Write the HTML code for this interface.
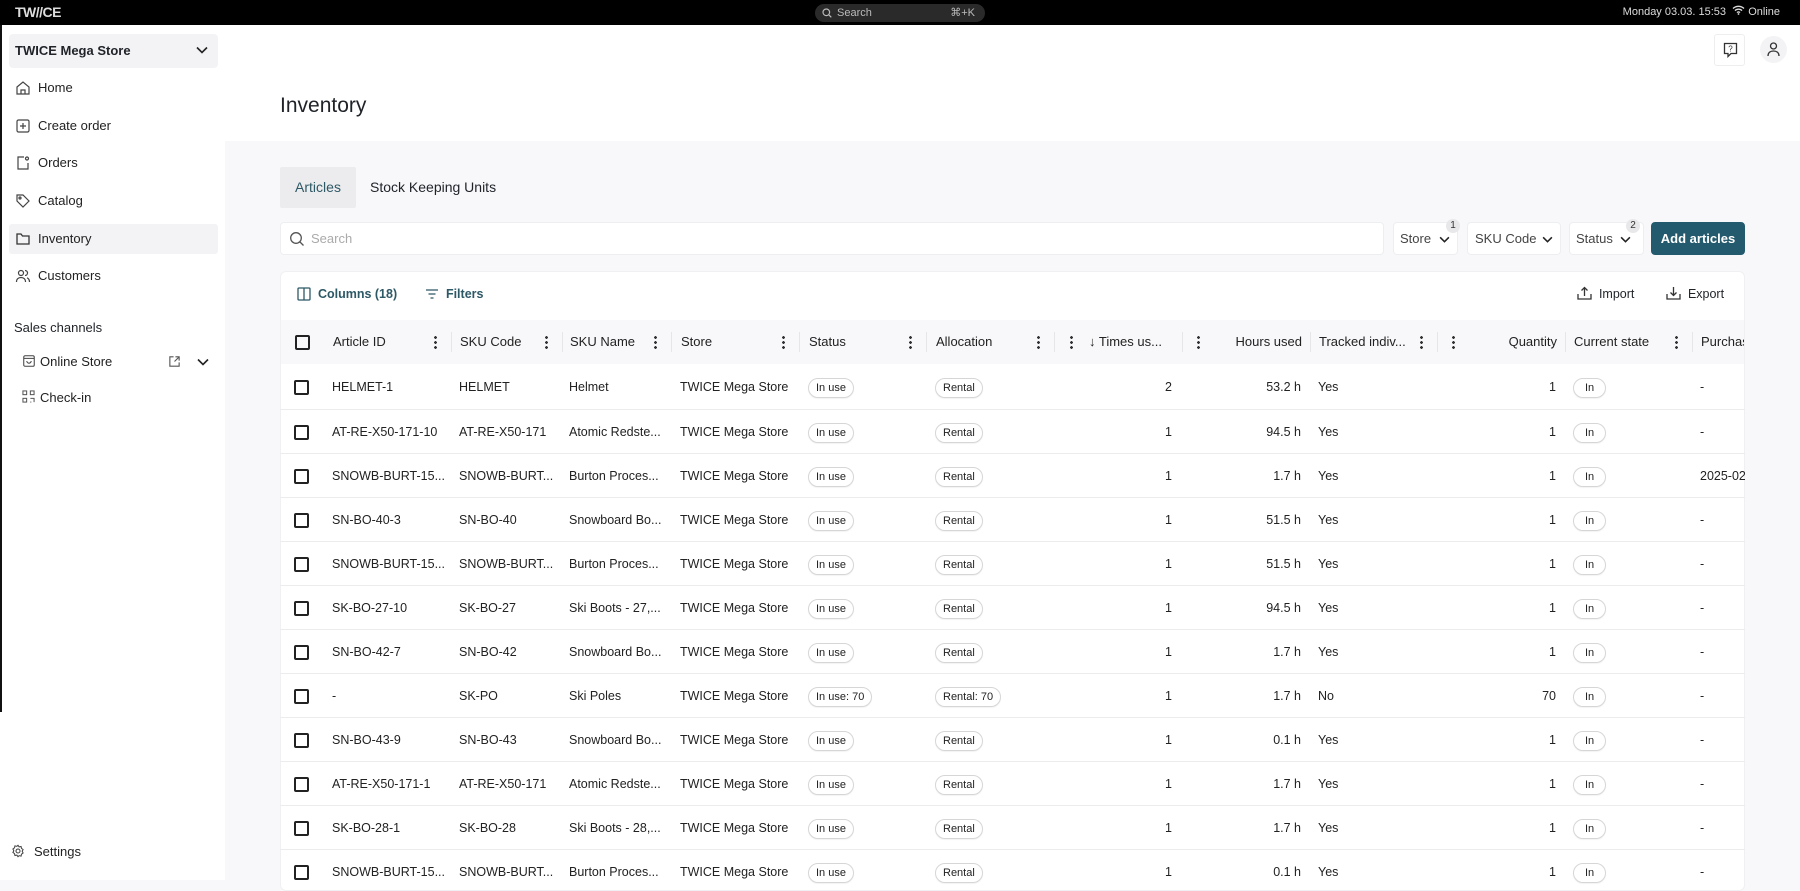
<!DOCTYPE html>
<html><head><meta charset="utf-8">
<style>
*{box-sizing:border-box;margin:0;padding:0}
body{width:1800px;height:880px;overflow:hidden;font-family:"Liberation Sans",sans-serif;color:#1f2328;background:#f8f8fa;position:relative;font-size:13px}
.top{position:absolute;left:0;top:0;width:1800px;height:25px;background:#000;color:#eee}
.logo{position:absolute;left:15px;top:4px;font-weight:700;font-size:14px;letter-spacing:-0.5px;color:#ddd}
.sp{position:absolute;left:815px;top:4px;width:170px;height:18px;border-radius:9px;background:#2a2a2a;color:#bbb;font-size:11px;line-height:18px;padding-left:22px}
.sp i{position:absolute;right:10px;font-style:normal}
.tr{position:absolute;right:20px;top:5px;font-size:11px;color:#ddd}
.side{position:absolute;left:0;top:25px;width:225px;height:855px;background:#fff}
.edge{position:absolute;left:0;top:25px;width:2px;height:687px;background:#111}
.sel{position:absolute;left:9px;top:9px;width:209px;height:34px;background:#f3f3f5;border-radius:4px;font-weight:600;font-size:13px;line-height:34px;padding-left:6px}
.nav{position:absolute;left:9px;width:209px;height:30px;line-height:30px;padding-left:29px;font-size:13px;font-weight:500;color:#222;border-radius:3px}
.nav svg{position:absolute;left:6px;top:7px}
.main-h{position:absolute;left:225px;top:25px;width:1575px;height:116px;background:#fff}
h1{position:absolute;left:280px;top:94px;font-size:21px;font-weight:400}
.tab{position:absolute;top:167px;height:41px;line-height:41px;font-size:14px}
.inp{position:absolute;top:222px;height:33px;background:#fff;border:1px solid #eceef0;border-radius:4px;font-size:13px;line-height:31px;color:#444}
.badge{position:absolute;top:-4px;width:14px;height:14px;border-radius:7px;background:#e8e8ea;font-size:10px;line-height:14px;text-align:center;color:#333}
.card{position:absolute;left:280px;top:271px;width:1465px;height:620px;background:#fff;border-radius:6px;overflow:hidden;border:1px solid #f0f0f2}
.hdr{position:absolute;left:0;top:48px;width:1465px;height:44px;background:#f8f8fa}
.row{position:absolute;left:0;width:1465px;height:44px;border-top:1px solid #ececee}
.c{position:absolute;top:0;line-height:44px;white-space:nowrap;font-size:12.5px;color:#222}
.hdr .c{font-weight:500;font-size:13px}
.r{text-align:right}
.cb{position:absolute;left:14px;top:15px;width:15px;height:15px;border:2px solid #222;border-radius:2px}
.k{position:absolute;top:15px;width:3px;height:14px;background:radial-gradient(circle,#333 1.3px,transparent 1.5px) 0 0/3px 5px repeat-y}
.sep{position:absolute;top:12px;width:1px;height:20px;background:#e6e6e8}
.pill{display:inline-block;border:1px solid #d6d6d8;border-radius:11px;height:20px;line-height:18px;padding:0 7px;font-size:11px;vertical-align:middle;box-shadow:0 1px 1px rgba(0,0,0,.05)}
</style></head><body>
<div class="top"><div class="logo">TW//CE</div>
<div class="sp"><svg style="position:absolute;left:7px;top:4px" width="10" height="10" viewBox="0 0 10 10"><circle cx="4.3" cy="4.3" r="3.3" fill="none" stroke="#bbb" stroke-width="1.2"/><path d="M6.8 6.8L9.3 9.3" stroke="#bbb" stroke-width="1.2"/></svg>Search<i>⌘+K</i></div>
<div class="tr">Monday 03.03. 15:53 &nbsp;<svg width="13" height="10" viewBox="0 0 13 10"><path d="M1 3.5a8 8 0 0 1 11 0M3 5.6a5 5 0 0 1 7 0M5 7.6a2 2 0 0 1 3 0" fill="none" stroke="#ddd" stroke-width="1.3"/><circle cx="6.5" cy="9" r=".9" fill="#ddd"/></svg> Online</div></div>
<div class="side">
<div class="sel">TWICE Mega Store<svg style="position:absolute;right:10px;top:12px" width="12" height="8" viewBox="0 0 12 8"><path d="M1 1.5l5 5 5-5" fill="none" stroke="#222" stroke-width="1.6"/></svg></div>
<div class="nav" style="top:48px"><svg width="16" height="16" viewBox="0 0 16 16" fill="none" stroke="#444" stroke-width="1.2"><path d="M2 7l6-5 6 5v7H2z M6 14v-4h4v4"/></svg>Home</div>
<div class="nav" style="top:86px"><svg width="16" height="16" viewBox="0 0 16 16" fill="none" stroke="#444" stroke-width="1.2"><rect x="2" y="2" width="12" height="12" rx="1.5"/><path d="M8 5v6M5 8h6"/></svg>Create order</div>
<div class="nav" style="top:123px"><svg width="16" height="16" viewBox="0 0 16 16" fill="none" stroke="#444" stroke-width="1.2"><path d="M9 2H3v12h10V8"/><circle cx="12" cy="3.5" r="1.5"/></svg>Orders</div>
<div class="nav" style="top:161px"><svg width="16" height="16" viewBox="0 0 16 16" fill="none" stroke="#444" stroke-width="1.2"><path d="M2 2h6l6 6-6 6-6-6z"/><circle cx="5" cy="5" r="1"/></svg>Catalog</div>
<div class="nav" style="top:199px;background:#f3f3f5"><svg width="16" height="16" viewBox="0 0 16 16" fill="none" stroke="#333" stroke-width="1.3"><path d="M2 3h4l1.5 2H14v8H2z"/></svg>Inventory</div>
<div class="nav" style="top:236px"><svg width="16" height="16" viewBox="0 0 16 16" fill="none" stroke="#444" stroke-width="1.2"><circle cx="6" cy="5" r="2.5"/><path d="M1.5 14c0-3 2-4.5 4.5-4.5s4.5 1.5 4.5 4.5M10 2.5a2.5 2.5 0 0 1 0 5M12 9.8c1.5.6 2.5 2 2.5 4.2"/></svg>Customers</div>
<div style="position:absolute;left:14px;top:295px;font-size:13px;font-weight:500">Sales channels</div>
<div class="nav" style="top:322px;padding-left:40px;left:0"><svg style="left:22px" width="14" height="14" viewBox="0 0 16 16" fill="none" stroke="#444" stroke-width="1.2"><rect x="2" y="2" width="12" height="12" rx="1.5"/><path d="M2 5h12M5.5 8a2.5 2.5 0 0 0 5 0"/></svg>Online Store
<svg style="position:absolute;left:168px;top:8px" width="13" height="13" viewBox="0 0 14 14" fill="none" stroke="#555" stroke-width="1.2"><path d="M6 2H2v10h10V8M8 2h4v4M12 2L7 7"/></svg>
<svg style="position:absolute;left:197px;top:11px" width="12" height="8" viewBox="0 0 12 8"><path d="M1 1.5l5 5 5-5" fill="none" stroke="#222" stroke-width="1.6"/></svg></div>
<div class="nav" style="top:358px;padding-left:40px;left:0"><svg style="left:22px" width="13" height="13" viewBox="0 0 14 14" fill="none" stroke="#555" stroke-width="1.1"><rect x="1" y="1" width="4" height="4"/><rect x="9" y="1" width="4" height="4"/><rect x="1" y="9" width="4" height="4"/><path d="M9 9h4v4M9 13h1"/></svg>Check-in</div>
<div class="nav" style="top:812px;left:5px"><svg width="14" height="14" viewBox="0 0 16 16" fill="none" stroke="#444" stroke-width="1.2"><circle cx="8" cy="8" r="2.3"/><path d="M8 1.5l1.3 1.8 2.2-.5.5 2.2 1.8 1.3-1 2 1 2-1.8 1.3-.5 2.2-2.2-.5L8 14.5l-1.3-1.8-2.2.5-.5-2.2-1.8-1.3 1-2-1-2 1.8-1.3.5-2.2 2.2.5z"/></svg>Settings</div>
</div>
<div class="edge"></div>
<div class="main-h">
<div style="position:absolute;left:1489px;top:9px;width:31px;height:32px;border:1px solid #eee;border-radius:3px;background:#fff"><svg style="position:absolute;left:8px;top:7px" width="15" height="16" viewBox="0 0 15 16" fill="none" stroke="#333" stroke-width="1.3"><path d="M1.5 1.5h12v10H8l-3 3v-3H1.5z"/><text x="7.5" y="9.5" font-size="8" text-anchor="middle" fill="#333" stroke="none" font-family="Liberation Sans">?</text></svg></div>
<div style="position:absolute;left:1535px;top:11px;width:27px;height:27px;border-radius:14px;background:#f3f3f6"><svg style="position:absolute;left:6px;top:5px" width="15" height="16" viewBox="0 0 15 16" fill="none" stroke="#333" stroke-width="1.3"><circle cx="7.5" cy="5" r="3"/><path d="M2 15c0-3.5 2.5-5 5.5-5s5.5 1.5 5.5 5"/></svg></div>
</div>
<h1>Inventory</h1>
<div class="tab" style="left:280px;width:76px;background:#ececee;text-align:center;color:#2d5866;border-radius:2px">Articles</div>
<div class="tab" style="left:370px">Stock Keeping Units</div>
<div class="inp" style="left:280px;width:1104px;padding-left:30px;color:#aaa"><svg style="position:absolute;left:8px;top:8px" width="16" height="16" viewBox="0 0 16 16"><circle cx="7" cy="7" r="5.3" fill="none" stroke="#555" stroke-width="1.3"/><path d="M11 11l3.5 3.5" stroke="#555" stroke-width="1.3"/></svg>Search</div>
<div class="inp" style="left:1393px;width:65px;padding-left:6px">Store <svg style="position:absolute;left:45px;top:13px" width="11" height="7" viewBox="0 0 12 8"><path d="M1 1.5l5 5 5-5" fill="none" stroke="#222" stroke-width="1.8"/></svg><div class="badge" style="left:52px">1</div></div>
<div class="inp" style="left:1467px;width:94px;padding-left:7px">SKU Code <svg style="position:absolute;left:74px;top:13px" width="11" height="7" viewBox="0 0 12 8"><path d="M1 1.5l5 5 5-5" fill="none" stroke="#222" stroke-width="1.8"/></svg></div>
<div class="inp" style="left:1569px;width:75px;padding-left:6px">Status <svg style="position:absolute;left:50px;top:13px" width="11" height="7" viewBox="0 0 12 8"><path d="M1 1.5l5 5 5-5" fill="none" stroke="#222" stroke-width="1.8"/></svg><div class="badge" style="left:56px">2</div></div>
<div class="inp" style="left:1651px;width:94px;background:#245a6e;border-color:#245a6e;color:#fff;font-weight:600;text-align:center">Add articles</div>
<div class="card">
<div style="position:absolute;left:16px;top:14px;color:#2d5866;font-weight:600;font-size:12.5px;line-height:16px"><svg style="vertical-align:-3px" width="14" height="14" viewBox="0 0 14 14" fill="none" stroke="#2d5866" stroke-width="1.3"><rect x="1" y="1" width="12" height="12" rx="1"/><path d="M7 1v12"/></svg>&nbsp; Columns (18)</div>
<div style="position:absolute;left:144px;top:14px;color:#2d5866;font-weight:600;font-size:12.5px;line-height:16px"><svg style="vertical-align:-2px" width="14" height="12" viewBox="0 0 14 12" fill="none" stroke="#2d5866" stroke-width="1.3"><path d="M1 2h12M3.5 6h7M5.5 10h3"/></svg>&nbsp; Filters</div>
<div style="position:absolute;left:1296px;top:14px;font-size:12.5px;line-height:16px"><svg style="vertical-align:-2px" width="15" height="14" viewBox="0 0 15 14" fill="none" stroke="#333" stroke-width="1.3"><path d="M1 8v5h13V8M7.5 10V1.5M4.5 4.5l3-3 3 3"/></svg>&nbsp; Import</div>
<div style="position:absolute;left:1385px;top:14px;font-size:12.5px;line-height:16px"><svg style="vertical-align:-2px" width="15" height="14" viewBox="0 0 15 14" fill="none" stroke="#333" stroke-width="1.3"><path d="M1 8v5h13V8M7.5 1v8.5M4.5 6.5l3 3 3-3"/></svg>&nbsp; Export</div>
<div class="hdr"><div class="cb"></div>
<div class="c" style="left:52px">Article ID</div><div class="k" style="left:153px"></div><div class="sep" style="left:170px"></div>
<div class="c" style="left:179px">SKU Code</div><div class="k" style="left:264px"></div><div class="sep" style="left:281px"></div>
<div class="c" style="left:289px">SKU Name</div><div class="k" style="left:373px"></div><div class="sep" style="left:390px"></div>
<div class="c" style="left:400px">Store</div><div class="k" style="left:501px"></div><div class="sep" style="left:518px"></div>
<div class="c" style="left:528px">Status</div><div class="k" style="left:628px"></div><div class="sep" style="left:645px"></div>
<div class="c" style="left:655px">Allocation</div><div class="k" style="left:756px"></div><div class="sep" style="left:773px"></div>
<div class="k" style="left:789px"></div><div class="c" style="left:808px">↓ Times us...</div><div class="sep" style="left:901px"></div>
<div class="k" style="left:916px"></div><div class="c r" style="left:950px;width:71px">Hours used</div><div class="sep" style="left:1029px"></div>
<div class="c" style="left:1038px">Tracked indiv...</div><div class="k" style="left:1139px"></div><div class="sep" style="left:1156px"></div>
<div class="k" style="left:1171px"></div><div class="c r" style="left:1200px;width:76px">Quantity</div><div class="sep" style="left:1284px"></div>
<div class="c" style="left:1293px">Current state</div><div class="k" style="left:1394px"></div><div class="sep" style="left:1411px"></div>
<div class="c" style="left:1420px">Purchas</div></div>
</div>
<style>
.row .c1{left:52px}.row .c2{left:179px}.row .c3{left:289px}.row .c4{left:400px}.row .c5{left:528px}.row .c6{left:655px}
.row .c7{left:800px;width:92px;text-align:right}.row .c8{left:930px;width:91px;text-align:right}.row .c9{left:1038px}
.row .c10{left:1200px;width:76px;text-align:right}.row .c11{left:1293px}.row .c12{left:1420px}
</style>
<div style="position:absolute;left:280px;top:365px;width:1465px;height:520px;overflow:hidden">
<div class="row" style="top:0;border-top:none"><div class="cb"></div><div class="c c1">HELMET-1</div><div class="c c2">HELMET</div><div class="c c3">Helmet</div><div class="c c4">TWICE Mega Store</div><div class="c c5"><span class="pill">In use</span></div><div class="c c6"><span class="pill">Rental</span></div><div class="c c7">2</div><div class="c c8">53.2 h</div><div class="c c9">Yes</div><div class="c c10">1</div><div class="c c11"><span class="pill" style="padding:0 11px">In</span></div><div class="c c12">-</div></div>
<div class="row" style="top:44px"><div class="cb"></div><div class="c c1">AT-RE-X50-171-10</div><div class="c c2">AT-RE-X50-171</div><div class="c c3">Atomic Redste...</div><div class="c c4">TWICE Mega Store</div><div class="c c5"><span class="pill">In use</span></div><div class="c c6"><span class="pill">Rental</span></div><div class="c c7">1</div><div class="c c8">94.5 h</div><div class="c c9">Yes</div><div class="c c10">1</div><div class="c c11"><span class="pill" style="padding:0 11px">In</span></div><div class="c c12">-</div></div>
<div class="row" style="top:88px"><div class="cb"></div><div class="c c1">SNOWB-BURT-15...</div><div class="c c2">SNOWB-BURT...</div><div class="c c3">Burton Proces...</div><div class="c c4">TWICE Mega Store</div><div class="c c5"><span class="pill">In use</span></div><div class="c c6"><span class="pill">Rental</span></div><div class="c c7">1</div><div class="c c8">1.7 h</div><div class="c c9">Yes</div><div class="c c10">1</div><div class="c c11"><span class="pill" style="padding:0 11px">In</span></div><div class="c c12">2025-02</div></div>
<div class="row" style="top:132px"><div class="cb"></div><div class="c c1">SN-BO-40-3</div><div class="c c2">SN-BO-40</div><div class="c c3">Snowboard Bo...</div><div class="c c4">TWICE Mega Store</div><div class="c c5"><span class="pill">In use</span></div><div class="c c6"><span class="pill">Rental</span></div><div class="c c7">1</div><div class="c c8">51.5 h</div><div class="c c9">Yes</div><div class="c c10">1</div><div class="c c11"><span class="pill" style="padding:0 11px">In</span></div><div class="c c12">-</div></div>
<div class="row" style="top:176px"><div class="cb"></div><div class="c c1">SNOWB-BURT-15...</div><div class="c c2">SNOWB-BURT...</div><div class="c c3">Burton Proces...</div><div class="c c4">TWICE Mega Store</div><div class="c c5"><span class="pill">In use</span></div><div class="c c6"><span class="pill">Rental</span></div><div class="c c7">1</div><div class="c c8">51.5 h</div><div class="c c9">Yes</div><div class="c c10">1</div><div class="c c11"><span class="pill" style="padding:0 11px">In</span></div><div class="c c12">-</div></div>
<div class="row" style="top:220px"><div class="cb"></div><div class="c c1">SK-BO-27-10</div><div class="c c2">SK-BO-27</div><div class="c c3">Ski Boots - 27,...</div><div class="c c4">TWICE Mega Store</div><div class="c c5"><span class="pill">In use</span></div><div class="c c6"><span class="pill">Rental</span></div><div class="c c7">1</div><div class="c c8">94.5 h</div><div class="c c9">Yes</div><div class="c c10">1</div><div class="c c11"><span class="pill" style="padding:0 11px">In</span></div><div class="c c12">-</div></div>
<div class="row" style="top:264px"><div class="cb"></div><div class="c c1">SN-BO-42-7</div><div class="c c2">SN-BO-42</div><div class="c c3">Snowboard Bo...</div><div class="c c4">TWICE Mega Store</div><div class="c c5"><span class="pill">In use</span></div><div class="c c6"><span class="pill">Rental</span></div><div class="c c7">1</div><div class="c c8">1.7 h</div><div class="c c9">Yes</div><div class="c c10">1</div><div class="c c11"><span class="pill" style="padding:0 11px">In</span></div><div class="c c12">-</div></div>
<div class="row" style="top:308px"><div class="cb"></div><div class="c c1">-</div><div class="c c2">SK-PO</div><div class="c c3">Ski Poles</div><div class="c c4">TWICE Mega Store</div><div class="c c5"><span class="pill">In use: 70</span></div><div class="c c6"><span class="pill">Rental: 70</span></div><div class="c c7">1</div><div class="c c8">1.7 h</div><div class="c c9">No</div><div class="c c10">70</div><div class="c c11"><span class="pill" style="padding:0 11px">In</span></div><div class="c c12">-</div></div>
<div class="row" style="top:352px"><div class="cb"></div><div class="c c1">SN-BO-43-9</div><div class="c c2">SN-BO-43</div><div class="c c3">Snowboard Bo...</div><div class="c c4">TWICE Mega Store</div><div class="c c5"><span class="pill">In use</span></div><div class="c c6"><span class="pill">Rental</span></div><div class="c c7">1</div><div class="c c8">0.1 h</div><div class="c c9">Yes</div><div class="c c10">1</div><div class="c c11"><span class="pill" style="padding:0 11px">In</span></div><div class="c c12">-</div></div>
<div class="row" style="top:396px"><div class="cb"></div><div class="c c1">AT-RE-X50-171-1</div><div class="c c2">AT-RE-X50-171</div><div class="c c3">Atomic Redste...</div><div class="c c4">TWICE Mega Store</div><div class="c c5"><span class="pill">In use</span></div><div class="c c6"><span class="pill">Rental</span></div><div class="c c7">1</div><div class="c c8">1.7 h</div><div class="c c9">Yes</div><div class="c c10">1</div><div class="c c11"><span class="pill" style="padding:0 11px">In</span></div><div class="c c12">-</div></div>
<div class="row" style="top:440px"><div class="cb"></div><div class="c c1">SK-BO-28-1</div><div class="c c2">SK-BO-28</div><div class="c c3">Ski Boots - 28,...</div><div class="c c4">TWICE Mega Store</div><div class="c c5"><span class="pill">In use</span></div><div class="c c6"><span class="pill">Rental</span></div><div class="c c7">1</div><div class="c c8">1.7 h</div><div class="c c9">Yes</div><div class="c c10">1</div><div class="c c11"><span class="pill" style="padding:0 11px">In</span></div><div class="c c12">-</div></div>
<div class="row" style="top:484px"><div class="cb"></div><div class="c c1">SNOWB-BURT-15...</div><div class="c c2">SNOWB-BURT...</div><div class="c c3">Burton Proces...</div><div class="c c4">TWICE Mega Store</div><div class="c c5"><span class="pill">In use</span></div><div class="c c6"><span class="pill">Rental</span></div><div class="c c7">1</div><div class="c c8">0.1 h</div><div class="c c9">Yes</div><div class="c c10">1</div><div class="c c11"><span class="pill" style="padding:0 11px">In</span></div><div class="c c12">-</div></div>
</div>
</body></html>
